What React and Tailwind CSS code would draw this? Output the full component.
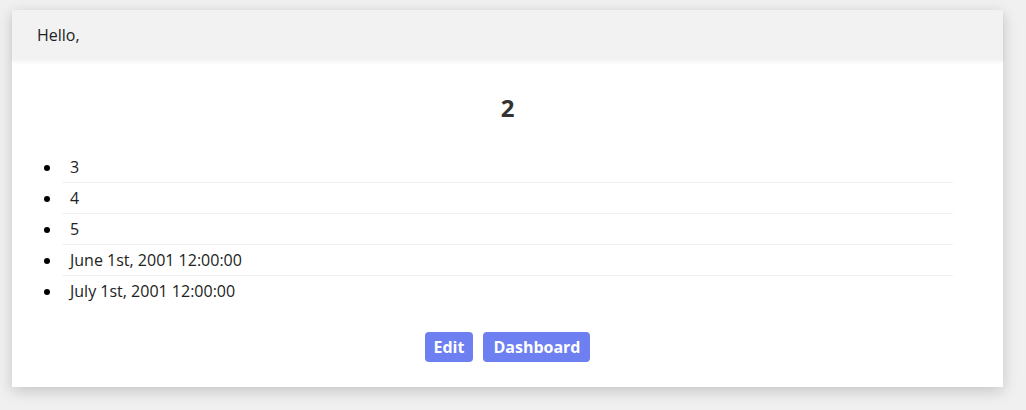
export default function App() {
  const items = ["3", "4", "5", "June 1st, 2001 12:00:00", "July 1st, 2001 12:00:00"];

  return (
    <div
      className="min-h-[410px] bg-[#f0f0f0] pt-[10px] pl-[12px] text-[#222]"
      style={{ fontFamily: '"Open Sans", "Liberation Sans", sans-serif' }}
    >
      <div className="w-[991px] bg-white shadow-[0_4px_14px_rgba(0,0,0,0.18)]">
        <div className="flex h-[50px] items-center bg-[#f2f2f2] pl-[25px] text-[16px] shadow-[0_2px_4px_rgba(0,0,0,0.05)]">
          Hello,
        </div>
        <div className="px-[10px] pt-[30px] pb-[25px]">
          <h1 className="text-center text-[24px] font-bold leading-[36px] text-[#333]">2</h1>
          <ul className="mt-[26px] list-disc px-[40px] marker:text-black">
            {items.map((item, i) => (
              <li
                key={item}
                className={
                  "py-[3px] pl-[8px] text-[16px] leading-[24px] " +
                  (i < items.length - 1 ? "border-b border-[#f0f0f0]" : "")
                }
              >
                {item}
              </li>
            ))}
          </ul>
          <div className="mt-[26px] flex justify-center gap-[10px]">
            <button className="h-[30px] rounded-[4px] bg-[#6e7ff1] px-[9px] text-[16px] font-bold text-white">
              Edit
            </button>
            <button className="h-[30px] rounded-[4px] bg-[#6e7ff1] px-[10px] text-[16px] font-bold text-white">
              Dashboard
            </button>
          </div>
        </div>
      </div>
    </div>
  );
}
